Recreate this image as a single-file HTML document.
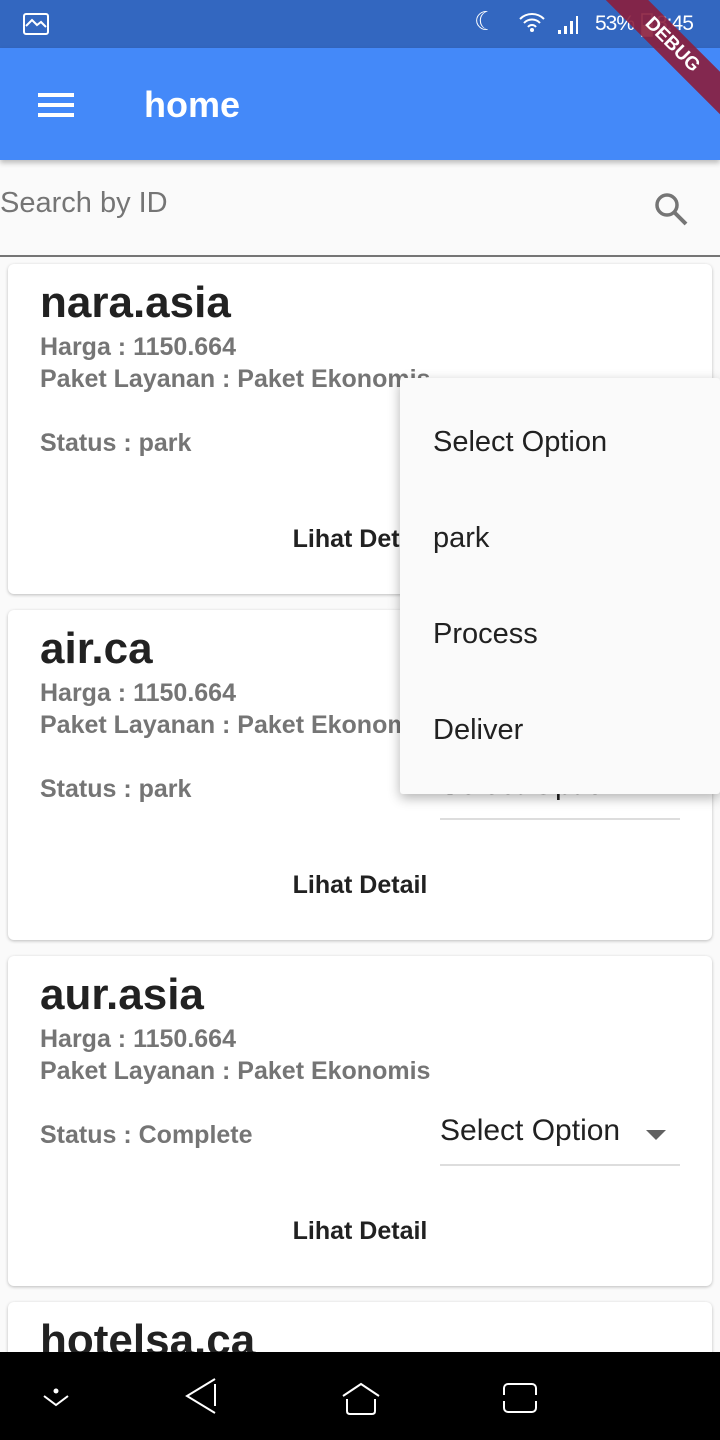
<!DOCTYPE html>
<html><head><meta charset="utf-8"><style>
*{margin:0;padding:0;box-sizing:border-box}
html,body{width:720px;height:1440px;overflow:hidden}
body{background:#fafafa;font-family:"Liberation Sans",Roboto,sans-serif;position:relative}
.status{position:absolute;top:0;left:0;width:720px;height:48px;background:#3367c0;color:#fff}
.appbar{position:absolute;top:48px;left:0;width:720px;height:112px;background:#4489f9;box-shadow:0 3px 5px rgba(0,0,0,.25)}
.search{position:absolute;top:160px;left:0;width:720px;height:97px;border-bottom:2px solid #757575}
.card{position:absolute;left:8px;width:704px;height:330px;background:#fff;border-radius:6px;box-shadow:0 1px 3px rgba(0,0,0,.25);overflow:hidden}
.t{position:absolute;left:32px;font-size:44px;font-weight:bold;color:#212121}
.g{position:absolute;left:32px;font-size:25px;font-weight:bold;color:#757575}
.ld{position:absolute;left:0;width:704px;text-align:center;font-size:25px;font-weight:bold;color:#212121;top:261px}
.dd{position:absolute;left:432px;width:240px;top:158px;height:52px;border-bottom:2px solid #ddd;font-size:30px;color:#212121}
.menu{position:absolute;left:400px;top:378px;width:320px;height:416px;background:#fafafa;box-shadow:0 4px 12px rgba(0,0,0,.3);border-radius:3px}
.mi{position:absolute;left:33px;font-size:29px;color:#212121}
.nav{position:absolute;top:1352px;left:0;width:720px;height:88px;background:#000}
.rib{position:absolute;top:0;right:0;width:150px;height:150px;overflow:hidden}
</style></head><body>
<div class="status">
<svg style="position:absolute;left:23px;top:13px" width="26" height="22" viewBox="0 0 26 22"><rect x="1" y="1" width="24" height="20" rx="2" fill="none" stroke="#fff" stroke-width="2"/><path d="M3 13l6-6 5 5 4-3 5 5" fill="none" stroke="#fff" stroke-width="2"/></svg>
<div style="position:absolute;left:474px;top:6px;font-size:26px">☾</div>
<svg style="position:absolute;left:517px;top:10px" width="30" height="28" viewBox="0 0 30 28"><path d="M3 9a17 17 0 0 1 24 0M7 13a11 11 0 0 1 16 0M11 17a5 5 0 0 1 8 0" fill="none" stroke="#fff" stroke-width="2"/><circle cx="15" cy="20" r="2" fill="#fff"/></svg>
<svg style="position:absolute;left:556px;top:14px" width="30" height="22"><rect x="2" y="16" width="3" height="4" fill="#fff"/><rect x="8" y="12" width="3" height="8" fill="#fff"/><rect x="14" y="7" width="3" height="13" fill="#fff"/><rect x="20" y="2" width="2" height="18" fill="#fff"/></svg>
<div style="position:absolute;left:595px;top:12px;font-size:21px;letter-spacing:-1px">53%</div>
<svg style="position:absolute;left:641px;top:11px" width="12" height="26"><rect x="1" y="3" width="10" height="22" fill="none" stroke="#fff" stroke-width="1.5"/><rect x="1" y="14" width="10" height="11" fill="#fff"/></svg>
<div style="position:absolute;left:656px;top:12px;font-size:21px;letter-spacing:-1px">8:45</div>
</div>
<div class="appbar">
<div style="position:absolute;left:38px;top:45px;width:36px;height:4px;background:#fff;box-shadow:0 10px 0 #fff,0 20px 0 #fff"></div>
<div style="position:absolute;left:144px;top:36px;font-size:36px;font-weight:bold;color:#fff">home</div>
</div>
<div class="rib"><div style="position:absolute;left:2px;top:30px;width:200px;height:30px;background:rgba(139,30,60,.9);transform:rotate(45deg);color:#fff;font-size:19px;font-weight:bold;text-align:center;line-height:30px">DEBUG</div></div>
<div class="search">
<div style="position:absolute;left:0;top:27px;font-size:29px;color:#757575">Search by ID</div>
<svg style="position:absolute;left:652px;top:30px" width="40" height="40" viewBox="0 0 40 40"><circle cx="15" cy="15" r="10" fill="none" stroke="#757575" stroke-width="3.5"/><path d="M22 22l12 12" stroke="#757575" stroke-width="4"/></svg>
</div>

<div class="card" style="top:264px"><div class="t" style="top:14px">nara.asia</div><div class="g" style="top:69px">Harga : 1150.664</div><div class="g" style="top:101px">Paket Layanan : Paket Ekonomis</div><div class="g" style="top:165px">Status : park</div><div class="ld">Lihat Detail</div></div>
<div class="card" style="top:610px"><div class="t" style="top:14px">air.ca</div><div class="g" style="top:69px">Harga : 1150.664</div><div class="g" style="top:101px">Paket Layanan : Paket Ekonomis</div><div class="g" style="top:165px">Status : park</div><div class="dd">Select Option</div><div class="ld">Lihat Detail</div></div>
<div class="card" style="top:956px"><div class="t" style="top:14px">aur.asia</div><div class="g" style="top:69px">Harga : 1150.664</div><div class="g" style="top:101px">Paket Layanan : Paket Ekonomis</div><div class="g" style="top:165px">Status : Complete</div><div class="dd">Select Option<svg style="position:absolute;left:206px;top:16px" width="20" height="10"><path d="M0 0h20L10 10z" fill="#616161"/></svg></div><div class="ld">Lihat Detail</div></div>
<div class="card" style="top:1302px"><div class="t" style="top:14px">hotelsa.ca</div></div>

<div class="menu">
<div class="mi" style="top:48px">Select Option</div>
<div class="mi" style="top:144px">park</div>
<div class="mi" style="top:240px">Process</div>
<div class="mi" style="top:336px">Deliver</div>
</div>

<div class="nav">
<svg style="position:absolute;left:40px;top:30px" width="30" height="30"><circle cx="16" cy="9" r="2.5" fill="#fff"/><path d="M4 14l12 9 12-9" fill="none" stroke="#fff" stroke-width="2"/></svg>
<svg style="position:absolute;left:183px;top:24px" width="36" height="40"><path d="M32 3L4 20l28 17" fill="none" stroke="#fff" stroke-width="2"/><path d="M32 8v22" stroke="#fff" stroke-width="2"/></svg>
<svg style="position:absolute;left:340px;top:30px" width="42" height="36"><path d="M3 14L21 2l18 12" fill="none" stroke="#fff" stroke-width="2"/><path d="M7 17v12q0 3 3 3h22q3 0 3-3V17" fill="none" stroke="#fff" stroke-width="2"/></svg>
<svg style="position:absolute;left:502px;top:30px" width="36" height="36"><rect x="2" y="2" width="32" height="28" rx="4" fill="none" stroke="#fff" stroke-width="2"/><rect x="0" y="13" width="36" height="6" fill="#000"/></svg>
</div>
</body></html>
